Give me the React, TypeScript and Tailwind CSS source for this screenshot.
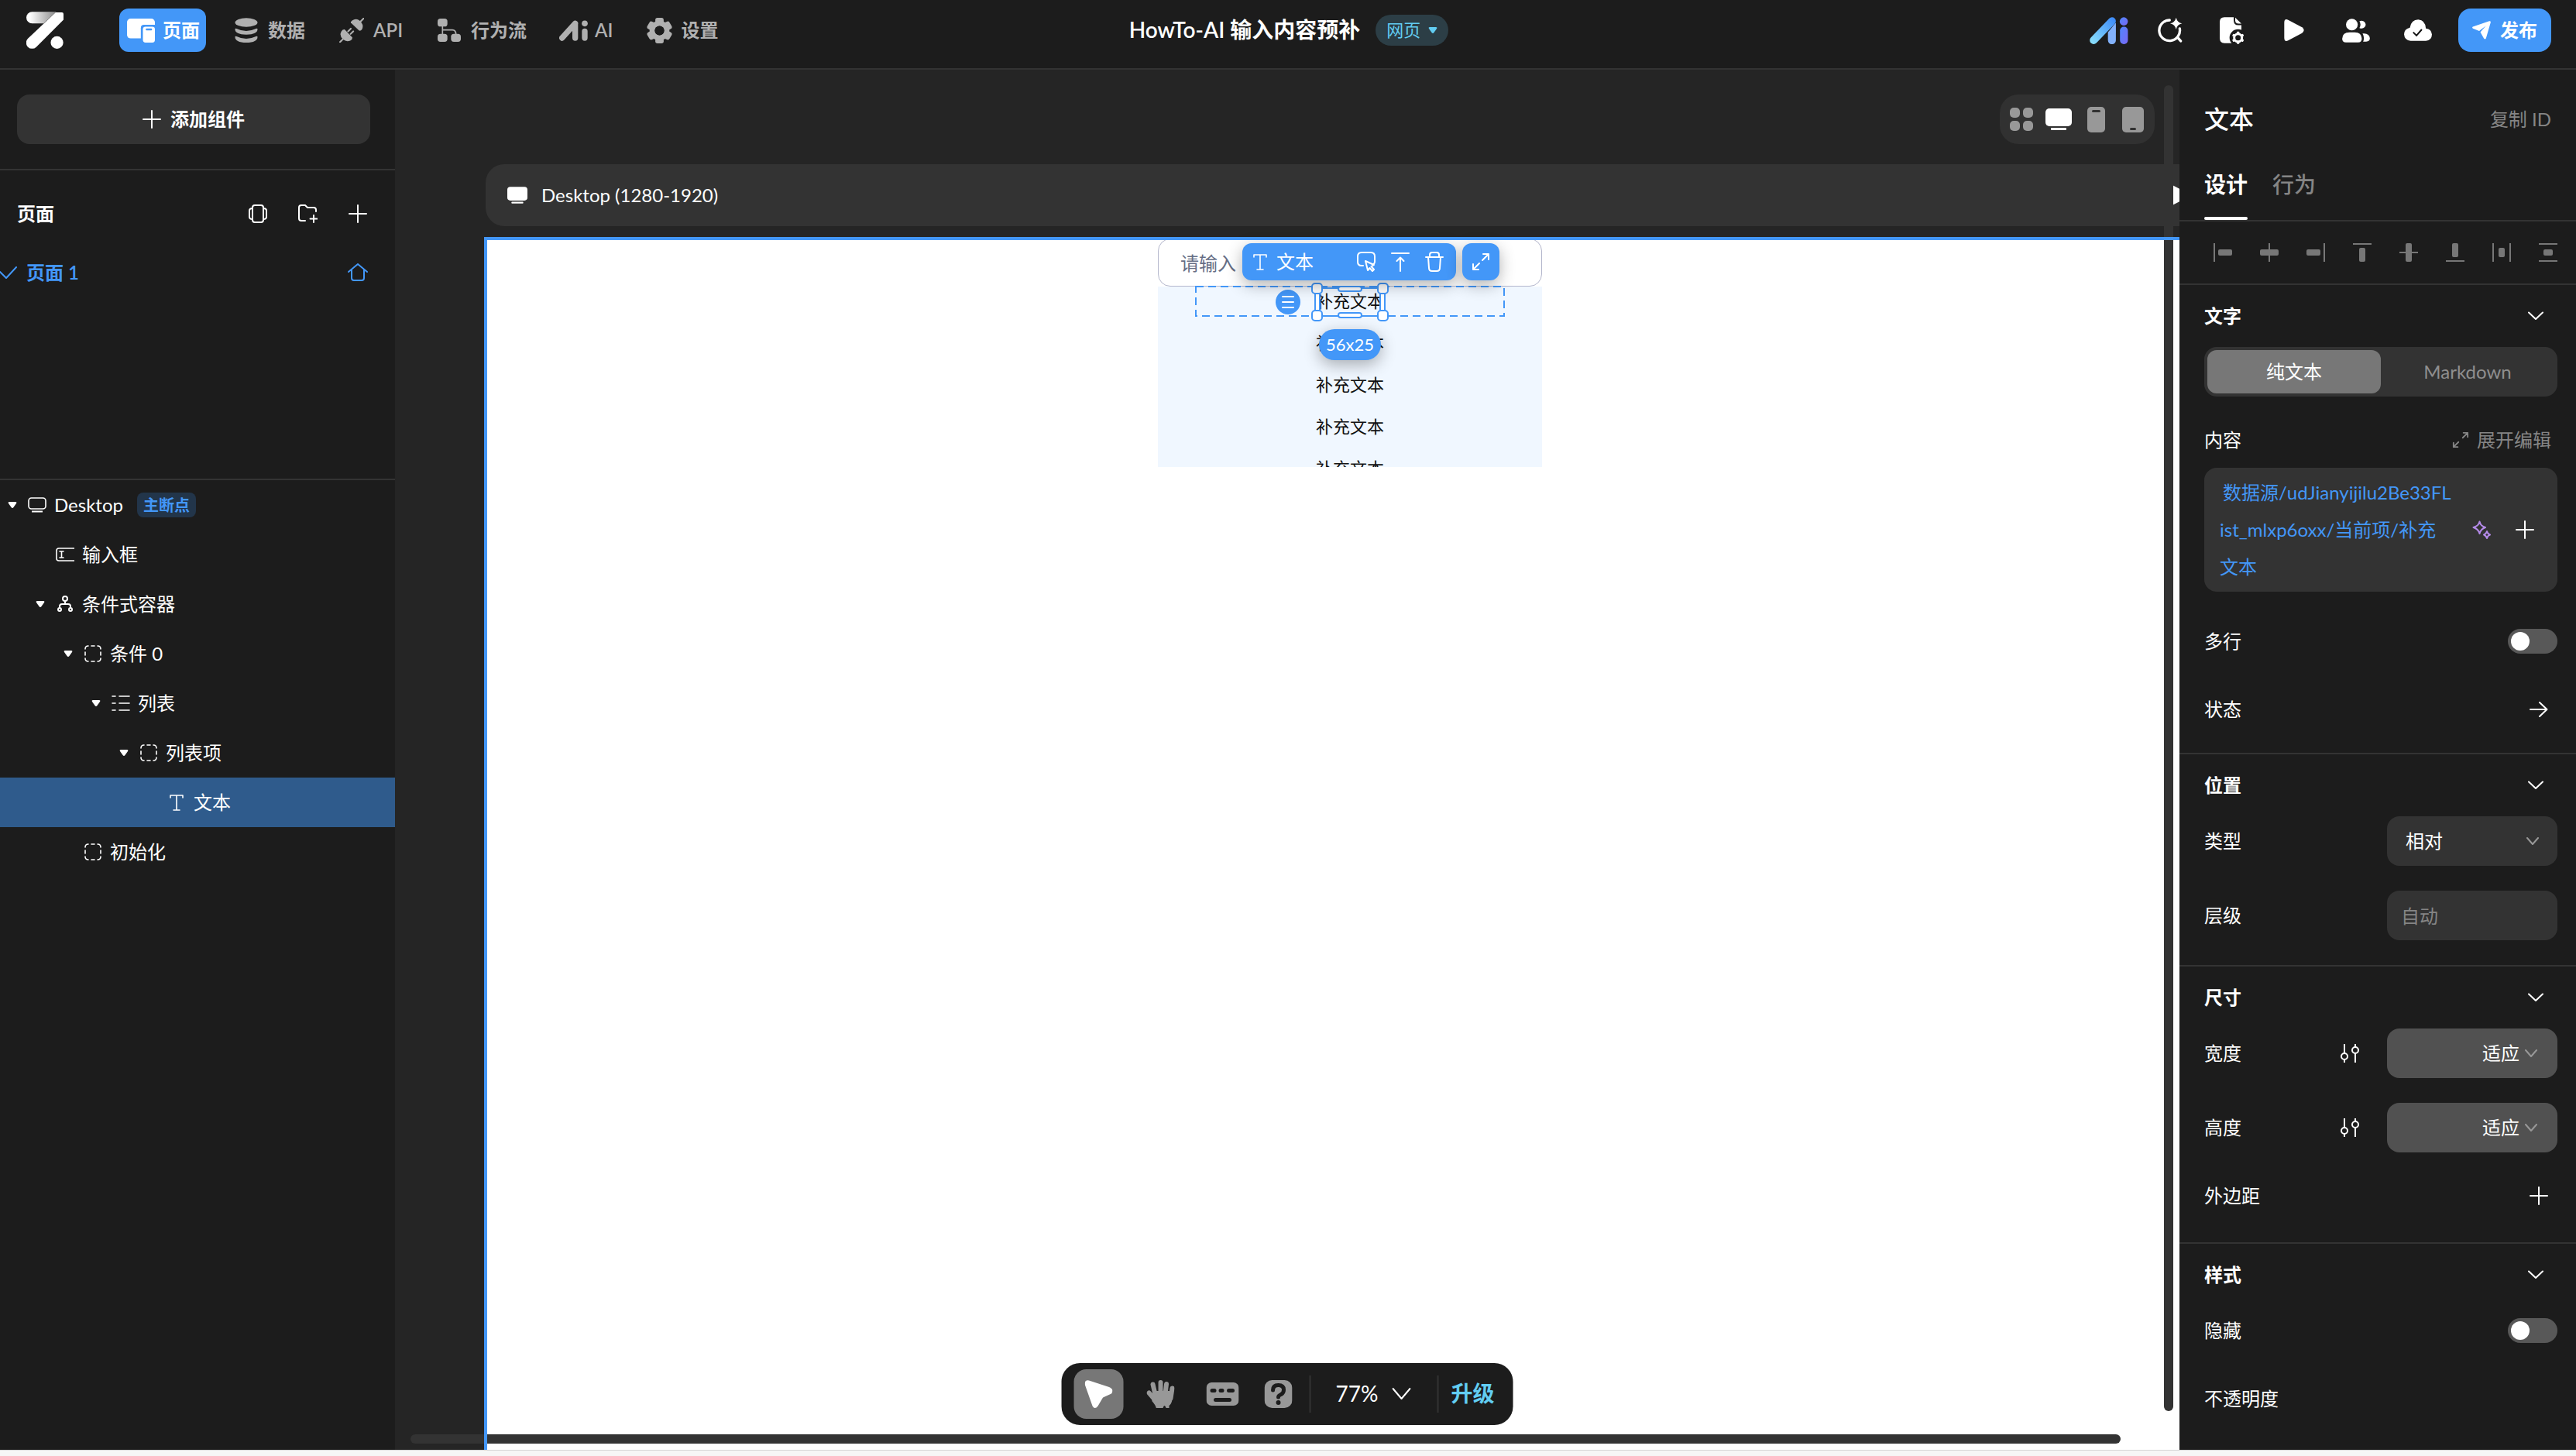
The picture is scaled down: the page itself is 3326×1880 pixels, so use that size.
import React, { useState, FC, ReactNode } from 'react';

interface IconProps {
  w: number,
  h: number,
  box: string,
  children: ReactNode,
}

// Small wrapper so each drawing only has to list its own shapes
const Icon: FC<IconProps> = ({ w, h, box, children }) => (
  <svg width={w} height={h} viewBox={box} fill="none" className="shrink-0" aria-hidden="true">
    {children}
  </svg>
);

const Stroke: FC<{ w: number, h: number, box: string, d: string, width?: number }> = ({
  w, h, box, d, width = 2,
}) => (
  <Icon w={w} h={h} box={box}>
    <path d={d} stroke="currentColor" strokeWidth={width} strokeLinecap="round" strokeLinejoin="round" />
  </Icon>
);

const Plus = () => <Stroke w={24} h={24} box="0 0 24 24" d="M12 1v22M1 12h22" />;
const Chevron = () => <Stroke w={20} h={12} box="0 0 20 12" d="M1 1.5l9 8.5 9-8.5" />;
const Expand = () => (
  <Stroke w={24} h={24} box="0 0 24 24" d="M15 2h7v7M22 2l-8 8M9 22H2v-7M2 22l8-8" />
);
const Triangle = () => (
  <Icon w={12} h={10} box="0 0 12 10">
    <path d="M2 1h8q2 0 1 2L7.500 8Q6 10 4.500 8L1 3Q0 1 2 1z" fill="currentColor" />
  </Icon>
);

const Logo = () => (
  <Icon w={48} h={48} box="0 0 142 142">
    <defs>
      <linearGradient id="logoBar" x1="0" y1="0" x2="1" y2="0">
        <stop offset="0.1" stopColor="#fff" />
        <stop offset="1" stopColor="#8a8a8a" />
      </linearGradient>
    </defs>
    <path d="M22 1h92L66 45H22a22 22 0 0 1 0-44z" fill="url(#logoBar)" />
    <path d="M112 3h24q6 0 6 6v22L38 135A22 22 0 0 1 6 103z" fill="#fff" />
    <circle cx="117" cy="118" r="24" fill="#fff" />
  </Icon>
);

const PagesIcon = () => (
  <Icon w={36} h={31} box="0 0 107 92">
    <rect width="107" height="76" rx="14" fill="#fff" />
    <path d="M53 92V36q0-12 12-12h42v68z" fill="#4397f8" />
    <rect x="61" y="31" width="46" height="61" rx="10" fill="#fff" />
    <rect x="72" y="38" width="24" height="7" rx="3" fill="#4397f8" />
  </Icon>
);

const DataIcon = () => (
  <Icon w={30} h={32} box="0 0 87 96">
    <g fill="currentColor">
      <ellipse cx="43.5" cy="18" rx="43.500" ry="17.500" />
      <path d="M0 44Q0 39 6 42 43 60 81 42 87 39 87 44 87 64 43.500 65 0 64 0 44z" />
      <path d="M0 74Q0 69 6 72 43 90 81 72 87 69 87 74 87 95 43.500 96 0 95 0 74z" />
    </g>
  </Icon>
);

const PlugIcon = () => (
  <Icon w={32} h={32} box="0 0 92 92">
    <path d="M90 3L78 15M3 90l12-12M33 50l10-10M42 60l10-10" stroke="currentColor" strokeWidth="6" strokeLinecap="round" />
    <path d="M43 18l30 29q8 3 12-5 6-13-3-25Q66-2 48 10q-6 4-5 8z" fill="currentColor" />
    <path d="M20 43l29 30q0 8-8 12-15 6-27-5Q-1 66 8 50q5-8 12-7z" fill="currentColor" />
  </Icon>
);

const FlowIcon = () => (
  <Icon w={30} h={30} box="0 0 90 90">
    <path d="M19 28v34M19 44h38q14 0 14 18" stroke="currentColor" strokeWidth="5" />
    <rect width="38" height="31" rx="11" fill="currentColor" />
    <rect y="59" width="38" height="31" rx="11" fill="currentColor" />
    <rect x="52" y="59" width="38" height="31" rx="11" fill="currentColor" />
  </Icon>
);

const AiIcon = () => (
  <Icon w={37} h={27} box="0 0 111 79">
    <path d="M11 68L62 12M62 12v56M99 42v26" stroke="currentColor" strokeWidth="22" strokeLinecap="round" strokeLinejoin="round" />
    <circle cx="99" cy="12" r="11.500" fill="currentColor" />
  </Icon>
);

const GearIcon = () => (
  <Icon w={33} h={33} box="-49 -49 98 98">
    <circle r="28" stroke="currentColor" strokeWidth="20" />
    {[0, 60, 120, 180, 240, 300].map((deg) => (
      <rect key={deg} x="-16" y="-49" width="32" height="26" rx="8" fill="currentColor" transform={`rotate(${deg})`} />
    ))}
    <circle r="18" fill="#1c1c1c" />
  </Icon>
);

const AiColorIcon = () => (
  <Icon w={50} h={35} box="0 0 150 106">
    <defs>
      <linearGradient id="aiSlash" gradientUnits="userSpaceOnUse" x1="0" y1="95" x2="95" y2="10">
        <stop offset="0" stopColor="#8be0fb" />
        <stop offset="1" stopColor="#3f8df9" />
      </linearGradient>
      <linearGradient id="aiDot" x1="0" y1="0" x2="1" y2="1">
        <stop offset="0" stopColor="#4f86fa" />
        <stop offset="1" stopColor="#7a68f5" />
      </linearGradient>
    </defs>
    <path d="M71 60l31-38v69a15.500 15.500 0 0 1-31 0z" fill="#82b1fb" />
    <path d="M15 91L87 16" stroke="url(#aiSlash)" strokeWidth="30" strokeLinecap="round" />
    <circle cx="133" cy="17" r="16" fill="url(#aiDot)" />
    <rect x="118" y="38" width="31" height="68" rx="15" fill="url(#aiDot)" />
  </Icon>
);

const SearchSparkIcon = () => (
  <Icon w={32} h={32} box="0 0 94 96">
    <path d="M45 9A40 40 0 1 0 84 42M76 76l12 14" stroke="currentColor" strokeWidth="10" strokeLinecap="round" />
    <path d="M70-1q4 19 23 23-19 4-23 23-4-19-23-23 19-4 23-23z" fill="currentColor" />
  </Icon>
);

const FileGearIcon = () => (
  <Icon w={32} h={35} box="0 0 96 104">
    <path d="M18 0h36v12q0 19 18 19h12v70H18Q0 99 0 82V18Q0 0 18 0z" fill="currentColor" />
    <path d="M60 2l24 23H74Q60 25 60 12z" fill="currentColor" />
    <circle cx="71" cy="80" r="33" fill="#1c1c1c" />
    <circle cx="71" cy="80" r="15" stroke="currentColor" strokeWidth="9" />
    {[0, 60, 120, 180, 240, 300].map((deg) => (
      <rect key={deg} x="66" y="56" width="10" height="9" rx="3" fill="currentColor" transform={`rotate(${deg} 71 80)`} />
    ))}
  </Icon>
);

const PlayIcon = () => (
  <Icon w={26} h={28} box="0 0 76 84">
    <path d="M0 12Q0-4 15 2l54 29q14 11 0 22L15 82Q0 88 0 72z" fill="currentColor" />
  </Icon>
);

const UsersIcon = () => (
  <Icon w={36} h={31} box="0 0 106 92">
    <g fill="currentColor">
      <circle cx="37" cy="23" r="22.500" />
      <path d="M28 53h20q26 0 27 24 0 14-14 14H14Q0 91 0 77 1 53 28 53z" />
      <path d="M66 10q12-5 20 3 8 10 0 20-8 8-20 3 8-13 0-26zM78 57h6q20 1 22 18 0 13-14 13H80q7-15-2-31z" />
    </g>
  </Icon>
);

const CloudIcon = () => (
  <Icon w={36} h={28} box="0 0 110 84">
    <path d="M26 84Q2 82 0 58q0-20 23-26Q28 1 56 0q28 2 30 35 22 2 24 24-1 24-24 25z" fill="currentColor" />
    <path d="M36 50l13 13 21-24" stroke="#111" strokeWidth="6" />
  </Icon>
);

const SendIcon = () => (
  <Icon w={24} h={24} box="0 0 24 24">
    <path d="M22 .2q2-.4 1.800 1.800l-6 20.500q-1.200 2-2.800 0L10.500 14.500 17.500 6.500 9 13 .8 9.800q-1.400-1.300 0-2.300z" fill="currentColor" />
  </Icon>
);

const DesktopSolid: FC<{ w: number, h: number }> = ({ w, h }) => (
  <Icon w={w} h={h} box="0 0 34 28">
    <rect width="34" height="23" rx="5" fill="currentColor" />
    <rect x="7" y="25" width="20" height="3" rx="1" fill="currentColor" />
  </Icon>
);

const DesktopLine = () => (
  <Icon w={24} h={20} box="0 0 24 20">
    <rect x="1" y="1" width="22" height="14" rx="3.500" stroke="currentColor" strokeWidth="1.600" />
    <path d="M5 18.500h14" stroke="currentColor" strokeWidth="2" />
  </Icon>
);
const InputIcon = () => (
  <Stroke w={24} h={18} box="0 0 24 18" width={1.6} d="M24 1H4Q1 1 1 4v10q0 3 3 3h20M5 5h5M5 13h5M7.500 5v8" />
);
const BranchIcon = () => (
  <Icon w={20} h={22} box="0 0 20 22">
    <g stroke="currentColor" strokeWidth="2">
      <circle cx="10" cy="4" r="3" />
      <circle cx="3" cy="18" r="2" />
      <circle cx="17" cy="18" r="2" />
      <path d="M10 7v4M3 16v-2q0-3 3-3h8q3 0 3 3v2" />
    </g>
  </Icon>
);
const DashedBox = () => (
  <Stroke
    w={22}
    h={22}
    box="0 0 22 22"
    width={1.6}
    d="M1 5q0-4 4-4M17 1q4 0 4 4M21 17q0 4-4 4M5 21q-4 0-4-4M9 1h4M9 21h4M1 9v4M21 9v4"
  />
);
const ListIcon = () => (
  <Stroke w={24} h={20} box="0 0 24 20" width={1.6} d="M1 1h4M1 10h4M1 19h4M10 1h13M10 10h13M10 19h13" />
);
const TextIcon = () => (
  <Stroke w={18} h={21} box="0 0 18 21" width={1.6} d="M1 4V1h16v3M9 1v18M5 20h8" />
);
const SlidersIcon = () => (
  <Icon w={24} h={24} box="0 0 24 24">
    <g stroke="currentColor" strokeWidth="2">
      <circle cx="5" cy="16" r="4" />
      <circle cx="19" cy="8" r="4" />
      <path d="M5 0v12M5 20v4M19 12v12M19 0v4" />
    </g>
  </Icon>
);

const navItems = [
  { label: '页面', icon: <PagesIcon /> },
  { label: '数据', icon: <DataIcon /> },
  { label: 'API', icon: <PlugIcon /> },
  { label: '行为流', icon: <FlowIcon /> },
  { label: 'AI', icon: <AiIcon /> },
  { label: '设置', icon: <GearIcon /> },
];

const Header = () => (
  <header className="grid h-[90px] shrink-0 grid-cols-[1fr_auto_1fr] items-center border-b-2 border-[#333333] pl-[34px] pr-8">
    <div className="flex items-center gap-[72px] pb-2.5">
      <Logo />
      <nav className="flex gap-6">
        {navItems.map((item, i) => (
          <button
            key={item.label}
            type="button"
            className={`flex h-14 items-center gap-2.5 rounded-xl pl-2.5 pr-2 font-semibold ${i === 0 ? 'bg-[#4397f8] text-white' : 'text-[#b0b0b0]'}`}
          >
            <span className="flex w-9 justify-center">{item.icon}</span>
            {item.label}
          </button>
        ))}
      </nav>
    </div>
    <div className="flex items-center gap-5 pb-2.5">
      <h1 className="text-[28px] font-semibold">HowTo-AI 输入内容预补</h1>
      <button type="button" className="flex h-10 items-center gap-2.5 rounded-full bg-[#2c3e46] px-3.5 text-[22px] text-[#62cdf2]">
        网页
        <Triangle />
      </button>
    </div>
    <div className="flex items-center justify-end pb-2.5">
      <button type="button" aria-label="AI" className="mr-9"><AiColorIcon /></button>
      <div className="mr-[34px] flex gap-11">
        <button type="button" aria-label="搜索" className="flex w-9 items-center justify-center"><SearchSparkIcon /></button>
        <button type="button" aria-label="文件" className="flex w-9 items-center justify-center"><FileGearIcon /></button>
        <button type="button" aria-label="预览" className="flex w-9 items-center justify-center"><PlayIcon /></button>
        <button type="button" aria-label="成员" className="flex w-9 items-center justify-center"><UsersIcon /></button>
        <button type="button" aria-label="云端" className="flex w-9 items-center justify-center"><CloudIcon /></button>
      </div>
      <button type="button" className="flex h-14 w-[120px] items-center justify-center gap-3 rounded-2xl bg-[#4397f8] font-semibold">
        <SendIcon />
        发布
      </button>
    </div>
  </header>
);

const treeRows = [
  { label: 'Desktop', pad: 'pl-0', icon: <DesktopLine />, open: true, badge: '主断点' },
  { label: '输入框', pad: 'pl-9', icon: <InputIcon />, open: false },
  { label: '条件式容器', pad: 'pl-9', icon: <BranchIcon />, open: true },
  { label: '条件 0', pad: 'pl-[72px]', icon: <DashedBox />, open: true },
  { label: '列表', pad: 'pl-[108px]', icon: <ListIcon />, open: true },
  { label: '列表项', pad: 'pl-36', icon: <DashedBox />, open: true },
  { label: '文本', pad: 'pl-[180px]', icon: <TextIcon />, open: false },
  { label: '初始化', pad: 'pl-[72px]', icon: <DashedBox />, open: false },
];

const Sidebar = () => {
  const [selected, setSelected] = useState('文本');

  return (
    <aside className="flex w-[510px] shrink-0 flex-col">
      <div className="border-b-2 border-[#333333] px-[22px] py-8 pr-8">
        <button type="button" className="flex h-16 w-full items-center justify-center gap-3 rounded-2xl bg-[#333333] font-semibold">
          <Plus />
          添加组件
        </button>
      </div>
      <section className="h-[400px] border-b-2 border-[#333333] pt-[18px]">
        <div className="flex h-[76px] items-center pl-[22px] pr-9">
          <h2 className="flex-1 font-semibold">页面</h2>
          <div className="flex items-center gap-10">
            <button type="button" aria-label="弹窗">
              <Stroke w={24} h={24} box="0 0 24 24" d="M8 1h8q3 0 3 3v16q0 3-3 3H8q-3 0-3-3V4q0-3 3-3zM5 5Q1 5 1 8v8q0 3 4 3M19 5q4 0 4 3v8q0 3-4 3" />
            </button>
            <button type="button" aria-label="新建文件夹">
              <Stroke w={25} h={24} box="0 0 25 24" d="M9 21H4q-3 0-3-3V4q0-3 3-3h5l3 3h8q3 0 3 3v2M20 14v9M15.500 18.500h9" />
            </button>
            <button type="button" aria-label="新建页面"><Plus /></button>
          </div>
        </div>
        <div className="flex h-[76px] items-center pr-[35px] font-semibold text-[#4397f8]">
          <Stroke w={22} h={16} box="0 0 22 16" d="M0 7l8 8L21 1" />
          <span className="flex-1 pl-3">页面 1</span>
          <Stroke w={26} h={24} box="0 0 26 24" d="M1 11L13 1l12 10M5 8v11q0 3 3 3h10q3 0 3-3V8" />
        </div>
      </section>
      <ul>
        {treeRows.map((row) => (
          <li key={row.label}>
            <button
              type="button"
              onClick={() => setSelected(row.label)}
              className={`flex h-16 w-full items-center ${row.pad} ${selected === row.label ? 'bg-[#2f5b8c]' : ''}`}
            >
              <span className="flex w-8 justify-center">{row.open && <Triangle />}</span>
              <span className="ml-1 flex w-6 justify-center">{row.icon}</span>
              <span className="ml-2.5">{row.label}</span>
              {row.badge && (
                <span className="ml-[18px] flex h-8 items-center rounded-lg bg-[#22354a] px-2 text-xl font-semibold text-[#4397f8]">
                  {row.badge}
                </span>
              )}
            </button>
          </li>
        ))}
      </ul>
    </aside>
  );
};

const corners = ['-left-2 -top-2', '-right-2 -top-2', '-left-2 -bottom-2', '-right-2 -bottom-2'];
const edges = [
  'left-1/2 -top-1 -ml-4 h-2 w-8',
  'left-1/2 -bottom-1 -ml-4 h-2 w-8',
  'top-1/2 -left-1 -mt-4 h-8 w-2',
  'top-1/2 -right-1 -mt-4 h-8 w-2',
];

// Everything drawn over the selected list item
const Selection = () => (
  <>
    <svg width="400" height="40" viewBox="0 0 400 40" className="absolute left-12 -top-px" aria-hidden="true">
      <rect x="1" y="1" width="398" height="38" fill="none" stroke="#4397f8" strokeWidth="2" strokeDasharray="10 6" />
    </svg>
    <div className="absolute left-[204px] top-px h-[38px] w-[88px] border-2 border-[#4397f8]">
      {edges.map((pos) => (
        <span key={pos} className={`absolute rounded-full border-2 border-[#4397f8] bg-white ${pos}`} />
      ))}
      {corners.map((pos) => (
        <span key={pos} className={`absolute size-[15px] rounded-[5px] border-2 border-[#4397f8] bg-white ${pos}`} />
      ))}
    </div>
    <button type="button" aria-label="拖动" className="absolute left-[152px] top-1 flex size-8 items-center justify-center rounded-full bg-[#4397f8]">
      <Stroke w={16} h={16} box="0 0 16 16" d="M1 1h14M1 8h14M1 15h14" />
    </button>
    <span className="absolute left-[208px] top-[55px] flex h-10 w-20 items-center justify-center rounded-full bg-[#4397f8] text-[22px] shadow-[0_6px_20px_rgba(0,0,0,0.3)]">
      56x25
    </span>
    <div className="absolute -top-14 left-[109px] flex gap-2">
      <div className="flex h-12 w-[276px] items-center rounded-xl bg-[#4397f8] pl-3.5 pr-4 shadow-[0_6px_20px_rgba(0,0,0,0.3)]">
        <TextIcon />
        <span className="flex-1 pl-3">文本</span>
        <div className="flex gap-5">
          <button type="button" aria-label="选择父级">
            <Stroke w={24} h={26} box="0 0 24 26" d="M8 18H6q-5 0-5-5V6q0-5 5-5h12q5 0 5 5v7q0 2-2 4M11 12l3 12 2.500-3 3.500 4 2-2-3.500-4 3.500-2z" />
          </button>
          <button type="button" aria-label="上移">
            <Stroke w={24} h={26} box="0 0 24 26" d="M1 2h22M12 25V8M7.500 12L12 7.500l4.500 4.500" />
          </button>
          <button type="button" aria-label="删除">
            <Stroke w={24} h={26} box="0 0 24 26" d="M1 7h22M6 7V4q0-3 3-3h6q3 0 3 3v3M4 7l1 14q0 4 4 4h6q4 0 4-4l1-14" />
          </button>
        </div>
      </div>
      <button type="button" aria-label="展开" className="flex size-12 items-center justify-center rounded-xl bg-[#4397f8] shadow-[0_6px_20px_rgba(0,0,0,0.3)]">
        <Expand />
      </button>
    </div>
  </>
);

const BottomBar = () => (
  <div className="absolute bottom-8 left-1/2 z-30 flex h-20 -translate-x-1/2 items-center rounded-3xl bg-[#1c1c1c] pl-4 pr-6 text-[#989898]">
    <button type="button" aria-label="选择" className="flex size-16 items-center justify-center rounded-2xl bg-[#777777] text-white">
      <Icon w={36} h={36} box="0 0 36 36">
        <path d="M5.500 .5l26 8.500q7 3 3 8.500l-11 5-6.500 11q-4 5-7 0L.3 6Q-.5-.5 5.500 .5z" fill="currentColor" />
      </Icon>
    </button>
    <button type="button" aria-label="拖拽" className="ml-4 flex size-16 items-center justify-center">
      <Icon w={36} h={36} box="0 0 36 36">
        <path d="M8 5.500l3 13M18 3v14M25.500 5l-1.500 13M33 10.500l-2 13M3 16.500L12 27" stroke="currentColor" strokeWidth="6" strokeLinecap="round" />
        <path d="M9 14h24v11q-1 6-4 8v3h-4q-2-6-4 0h-8.700q-1-4-5.500-9z" fill="currentColor" />
      </Icon>
    </button>
    <button type="button" aria-label="快捷键" className="ml-4 flex size-16 items-center justify-center">
      <Icon w={42} h={30} box="0 0 42 30">
        <rect width="42" height="30" rx="7" fill="currentColor" />
        <path d="M7.500 10.500h3M18.500 10.500h2M29 10.500h5M12 22.500h18" stroke="#1c1c1c" strokeWidth="5" strokeLinecap="round" />
      </Icon>
    </button>
    <button type="button" aria-label="帮助" className="ml-2 flex size-16 items-center justify-center">
      <Icon w={36} h={36} box="0 0 36 36">
        <rect width="36" height="36" rx="10" fill="currentColor" />
        <path d="M11 13q0-6.500 7-6.500t7 6q0 4-3.500 6Q18 20 18 22" stroke="#1c1c1c" strokeWidth="5" strokeLinecap="round" />
        <circle cx="18" cy="29" r="3" fill="#1c1c1c" />
      </Icon>
    </button>
    <span className="ml-2 h-12 w-0.5 bg-[#333333]" />
    <button type="button" className="ml-8 mr-[34px] flex items-center gap-[18px] text-[28px] text-white">
      77%
      <Stroke w={24} h={16} box="0 0 24 16" d="M1 1l11 13L23 1" />
    </button>
    <span className="h-12 w-0.5 bg-[#333333]" />
    <button type="button" className="ml-4 text-[28px] font-semibold text-[#62cdf2]">升级</button>
  </div>
);

const Canvas = () => (
  <main className="relative flex min-w-0 flex-1 flex-col overflow-hidden bg-[#252525]">
    <div className="flex justify-end pr-8 pt-8">
      <div className="flex h-16 items-center gap-4 rounded-3xl bg-[#313131] px-3 text-[#989898]">
        <button type="button" aria-label="全部" className="flex w-8 justify-center">
          <Icon w={30} h={30} box="0 0 30 30">
            <g fill="currentColor">
              <rect width="13" height="13" rx="5" />
              <rect x="17" width="13" height="13" rx="5" />
              <rect y="17" width="13" height="13" rx="5" />
              <rect x="17" y="17" width="13" height="13" rx="5" />
            </g>
          </Icon>
        </button>
        <button type="button" aria-label="桌面" className="flex w-8 justify-center text-white"><DesktopSolid w={34} h={28} /></button>
        <button type="button" aria-label="手机" className="flex w-8 justify-center">
          <Icon w={23} h={33} box="0 0 23 33">
            <rect width="23" height="33" rx="5" fill="currentColor" />
            <rect x="6" y="4" width="11" height="3" rx="1.500" fill="#313131" />
          </Icon>
        </button>
        <button type="button" aria-label="平板" className="flex w-8 justify-center">
          <Icon w={28} h={33} box="0 0 28 33">
            <rect width="28" height="33" rx="5" fill="currentColor" />
            <rect x="10" y="27" width="8" height="3" rx="1.500" fill="#313131" />
          </Icon>
        </button>
      </div>
    </div>
    <div className="-mr-[43px] ml-[115px] mt-[26px] flex flex-1 flex-col">
      <div className="ml-0.5 flex h-20 items-center gap-[18px] rounded-3xl bg-[#333333] pl-7 pr-8">
        <DesktopSolid w={26} h={22} />
        <span className="flex-1">Desktop (1280-1920)</span>
        <PlayIcon />
      </div>
      <div className="relative mt-3.5 flex-1 bg-white pl-1 pt-1 text-[#111111]">
        <div className="mx-auto w-[496px]">
          <input
            aria-label="输入框"
            placeholder="请输入"
            className="-mt-0.5 block h-[62px] w-full rounded-2xl border border-[#b3b6cc] bg-white px-7 placeholder:text-[#666e85]"
          />
          <div className="relative text-white">
            <ul className="h-[233px] overflow-hidden bg-[#f0f7ff] text-center text-[22px] text-[#111111]">
              {[0, 1, 2, 3, 4].map((n) => (
                <li key={n} className="mb-4 h-[38px] leading-[38px]">补充文本</li>
              ))}
            </ul>
            <Selection />
          </div>
        </div>
      </div>
    </div>
    {/* scrollbars, with the frame outline kept above them */}
    <div className="absolute bottom-[50px] right-2 top-5 w-3 rounded-full bg-[#333333]" />
    <div className="absolute bottom-2 left-5 right-[76px] h-3 rounded-full bg-[#333333]" />
    <div className="pointer-events-none absolute bottom-0 left-[115px] right-0 top-[216px] border-l-4 border-t-4 border-[#4397f8]" />
    <BottomBar />
  </main>
);

const Section: FC<{ title: string, className?: string, children: ReactNode }> = ({ title, className = '', children }) => (
  <section className={`border-b-2 border-[#333333] pl-8 pr-6 last:border-b-0 ${className}`}>
    <div className="flex h-20 items-center justify-between pr-[18px]">
      <h3 className="font-bold">{title}</h3>
      <button type="button" aria-label={`收起${title}`}><Chevron /></button>
    </div>
    {children}
  </section>
);

const Toggle: FC<{ label: string, id: string }> = ({ label, id }) => {
  const [on, setOn] = useState(false);
  return (
    <div className="flex h-16 items-center justify-between">
      <label htmlFor={id}>{label}</label>
      <input
        id={id}
        type="checkbox"
        checked={on}
        onChange={() => setOn(!on)}
        className="h-8 w-16 appearance-none rounded-full bg-[#585858] p-1 before:block before:size-6 before:rounded-full before:bg-white checked:bg-[#4397f8] checked:before:ml-8"
      />
    </div>
  );
};

const SizeRow: FC<{ label: string, id: string }> = ({ label, id }) => (
  <div className="flex h-16 items-center">
    <label htmlFor={id} className="flex-1">{label}</label>
    <button type="button" aria-label={`${label}范围`} className="mr-9"><SlidersIcon /></button>
    <div className="relative">
      <select id={id} className="h-16 w-[220px] appearance-none rounded-2xl bg-[#515151] pl-[123px]">
        <option>适应</option>
      </select>
      <span className="pointer-events-none absolute right-[26px] top-[27px] text-[#989898]">
        <Stroke w={16} h={11} box="0 0 16 11" d="M1 1l7 8 7-8" />
      </span>
    </div>
  </div>
);

// bar is x, y, width, height
const alignIcons = [
  { name: '左对齐', bar: [6, 8, 18, 8], lines: 'M1 0v24' },
  { name: '水平居中', bar: [0, 8, 24, 8], lines: 'M12 0v24' },
  { name: '右对齐', bar: [0, 8, 18, 8], lines: 'M23 0v24' },
  { name: '顶对齐', bar: [8, 6, 8, 18], lines: 'M0 1h24' },
  { name: '垂直居中', bar: [8, 0, 8, 24], lines: 'M0 12h24' },
  { name: '底对齐', bar: [8, 0, 8, 18], lines: 'M0 23h24' },
  { name: '水平分布', bar: [8, 6, 8, 12], lines: 'M1 0v24M23 0v24' },
  { name: '垂直分布', bar: [6, 8, 12, 8], lines: 'M0 1h24M0 23h24' },
];

const Inspector = () => (
  <aside className="w-[512px] shrink-0 overflow-hidden rounded-br-2xl">
    <div className="flex h-24 items-center justify-between pl-8 pr-8 pt-8">
      <h2 className="text-[32px] font-medium">文本</h2>
      <button type="button" className="text-[#858585]">复制 ID</button>
    </div>
    <div className="mt-2 flex h-[92px] gap-8 border-b-2 border-[#333333] pl-8 text-[28px]">
      <button type="button" className="relative font-semibold">
        设计
        <span className="absolute inset-x-0 bottom-0 h-1 rounded-sm bg-white" />
      </button>
      <button type="button" className="font-medium text-[#858585]">行为</button>
    </div>
    <div className="flex h-[82px] items-center justify-between border-b-2 border-[#333333] pl-11 pr-6 text-[#777777]">
      {alignIcons.map(({ name, bar, lines }) => (
        <button key={name} type="button" aria-label={name}>
          <Icon w={24} h={24} box="0 0 24 24">
            <rect x={bar[0]} y={bar[1]} width={bar[2]} height={bar[3]} rx="2" fill="currentColor" />
            <path d={lines} stroke="currentColor" strokeWidth="2" />
          </Icon>
        </button>
      ))}
    </div>

    <Section title="文字" className="pb-6">
      <div className="flex h-16 rounded-2xl bg-[#333333] p-1">
        <button type="button" className="flex-1 rounded-xl bg-[#777777]">纯文本</button>
        <button type="button" className="flex-1 text-[#8f8f8f]">Markdown</button>
      </div>
      <div className="mb-3 mt-8 flex h-12 items-center justify-between pr-2">
        <span>内容</span>
        <button type="button" className="flex items-center gap-2.5 text-[#858585]">
          <Stroke w={22} h={22} box="0 0 24 24" d="M16 2h6v6M22 2l-7 7M8 22H2v-6M2 22l7-7" />
          展开编辑
        </button>
      </div>
      <div className="flex items-center rounded-2xl bg-[#333333] py-2 pl-5 pr-[30px]">
        <p className="flex-1 leading-[48px] text-[#4397f8]">
          <span className="pl-1">数据源/udJianyijilu2Be33FL</span>
          <br />
          ist_mlxp6oxx/当前项/补充
          <br />
          文本
        </p>
        <button type="button" aria-label="AI 生成" className="mr-8 text-[#b48ae8]">
          <Icon w={24} h={24} box="0 0 24 24">
            <path d="M9.500 1.500q1.500 6 7.500 7.500-6 2-7.500 8Q8 11 1.500 9 8 7.500 9.500 1.500zM19 14q.8 3.500 4 4.500-3.200 1-4 4.500-1-3.500-4-4.500 3-1 4-4.500z" stroke="currentColor" strokeWidth="2" strokeLinejoin="round" />
          </Icon>
        </button>
        <button type="button" aria-label="绑定数据"><Plus /></button>
      </div>
      <div className="mt-8 flex flex-col gap-6">
        <Toggle label="多行" id="multiline" />
        <div className="flex h-16 items-center justify-between pr-3">
          <span>状态</span>
          <button type="button" aria-label="状态">
            <Stroke w={24} h={22} box="0 0 24 22" d="M1 11h21M13 2l9.500 9-9.500 9" />
          </button>
        </div>
      </div>
    </Section>

    <Section title="位置" className="pb-8">
      <div className="flex flex-col gap-8">
        <div className="flex items-center justify-between">
          <label htmlFor="posType">类型</label>
          <div className="relative">
            <select id="posType" className="h-16 w-[220px] appearance-none rounded-2xl bg-[#333333] pl-6">
              <option>相对</option>
            </select>
            <span className="pointer-events-none absolute right-6 top-[27px] text-[#989898]">
              <Stroke w={16} h={11} box="0 0 16 11" d="M1 1l7 8 7-8" />
            </span>
          </div>
        </div>
        <div className="flex items-center justify-between">
          <label htmlFor="layer">层级</label>
          <input id="layer" placeholder="自动" className="h-16 w-[220px] rounded-2xl bg-[#333333] px-[18px] placeholder:text-[#858585]" />
        </div>
      </div>
    </Section>

    <Section title="尺寸" className="pb-7">
      <div className="flex flex-col gap-8">
        <SizeRow label="宽度" id="width" />
        <SizeRow label="高度" id="height" />
      </div>
      <div className="mt-6 flex h-16 items-center justify-between pr-3">
        <span>外边距</span>
        <button type="button" aria-label="添加外边距"><Plus /></button>
      </div>
    </Section>

    <Section title="样式">
      <Toggle label="隐藏" id="hidden" />
      <div className="mt-6 flex h-16 items-center">不透明度</div>
    </Section>
  </aside>
);

const App = () => (
  <div className="flex h-screen flex-col bg-[#1c1c1c] font-[Lato,'Noto_Sans_CJK_SC',sans-serif] text-2xl text-white">
    <Header />
    <div className="flex min-h-0 flex-1">
      <Sidebar />
      <Canvas />
      <Inspector />
    </div>
    <div className="h-2 shrink-0 border-t border-[#d5d5d5] bg-[#f6f6f6]" />
  </div>
);

export default App;
